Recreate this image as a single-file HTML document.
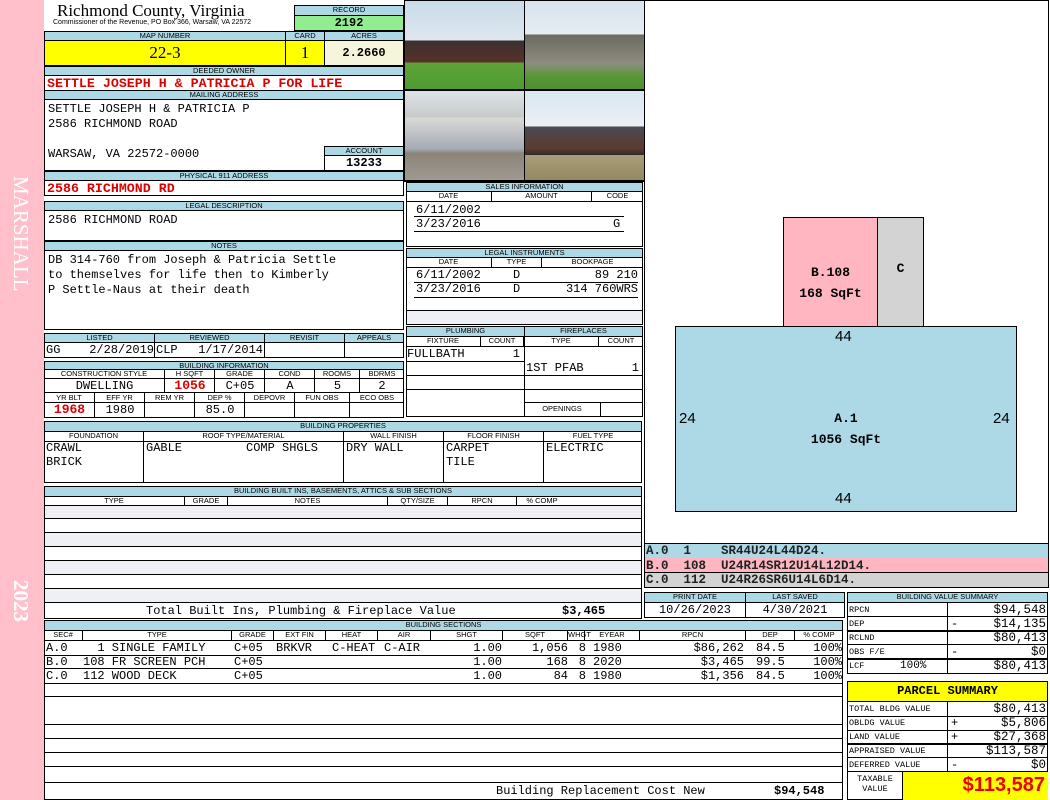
<!DOCTYPE html>
<html><head><meta charset="utf-8"><style>
*{box-sizing:border-box;margin:0;padding:0}
body{width:1050px;height:800px;background:#fff;position:relative;overflow:hidden;font-family:"Liberation Mono",monospace;font-size:12px;color:#000}
div{position:absolute}
.h{background:#add8e6;border:1px solid #000;font:7.5px "Liberation Sans",sans-serif;text-align:center;line-height:8px;white-space:nowrap;overflow:hidden}
.b{border:1px solid #000;background:#fff}
.s{font:7.5px "Liberation Sans",sans-serif;text-align:center;line-height:9px;border-right:1px solid #000;top:0;height:100%}
.m{font:12px "Liberation Mono",monospace;white-space:pre;line-height:14px}
.r{color:#d00;font-weight:bold}
.hl{border-bottom:1px solid #000;left:0;right:0}
.ra{text-align:right}
</style></head><body>
<div style="left:0;top:0;width:44px;height:800px;background:#ffc0cb"></div>
<div style="top:176px;color:#fff;font:21px 'Liberation Serif',serif;transform:rotate(90deg);transform-origin:0 0;left:33px;white-space:nowrap">MARSHALL</div>
<div style="left:33px;top:580px;color:#fff;font:bold 21px 'Liberation Serif',serif;transform:rotate(90deg);transform-origin:0 0;white-space:nowrap">2023</div>

<div style="left:57px;top:1px;font:17px 'Liberation Serif',serif">Richmond County, Virginia</div>
<div style="left:53px;top:19px;font:7px 'Liberation Sans',sans-serif;white-space:nowrap">Commissioner of the Revenue, PO Box 366, Warsaw, VA 22572</div>
<div class="h" style="left:294px;top:5px;width:110px;height:11px">RECORD</div>
<div style="left:294px;top:15px;width:110px;height:16px;background:#90ee90;border:1px solid #000;text-align:center;font:bold 12px 'Liberation Mono';line-height:14px">2192</div>

<div class="h" style="left:44px;top:31px;width:242px;height:10px">MAP NUMBER</div>
<div class="h" style="left:285px;top:31px;width:40px;height:10px">CARD</div>
<div class="h" style="left:324px;top:31px;width:80px;height:10px">ACRES</div>
<div style="left:44px;top:40px;width:242px;height:26px;background:#ffff00;border:1px solid #000;text-align:center;font:17px 'Liberation Serif',serif;line-height:24px">22-3</div>
<div style="left:285px;top:40px;width:40px;height:26px;background:#ffff00;border:1px solid #000;text-align:center;font:17px 'Liberation Serif',serif;line-height:24px">1</div>
<div style="left:324px;top:40px;width:80px;height:26px;background:#f5f5dc;border:1px solid #000;text-align:center;font:bold 12px 'Liberation Mono';line-height:24px">2.2660</div>

<div class="h" style="left:44px;top:66px;width:360px;height:10px">DEEDED OWNER</div>
<div class="b m r" style="left:44px;top:75px;width:360px;height:16px;line-height:15px;padding-left:2px;font-size:13.3px">SETTLE JOSEPH H &amp; PATRICIA P FOR LIFE</div>
<div class="h" style="left:44px;top:90px;width:360px;height:10px">MAILING ADDRESS</div>
<div class="b m" style="left:44px;top:99px;width:360px;height:72px;padding:2px 0 0 3px;line-height:15px">SETTLE JOSEPH H &amp; PATRICIA P
2586 RICHMOND ROAD

WARSAW, VA 22572-0000</div>
<div class="h" style="left:324px;top:146px;width:80px;height:10px">ACCOUNT</div>
<div class="b m" style="left:324px;top:155px;width:80px;height:16px;text-align:center;font-weight:bold;line-height:14px">13233</div>
<div class="h" style="left:44px;top:171px;width:360px;height:10px">PHYSICAL 911 ADDRESS</div>
<div class="b m r" style="left:44px;top:180px;width:360px;height:16px;line-height:15px;padding-left:2px;font-size:13.3px">2586 RICHMOND RD</div>

<div class="h" style="left:44px;top:201px;width:360px;height:10px">LEGAL DESCRIPTION</div>
<div class="b m" style="left:44px;top:210px;width:360px;height:31px;padding:2px 0 0 3px">2586 RICHMOND ROAD</div>
<div class="h" style="left:44px;top:241px;width:360px;height:10px">NOTES</div>
<div class="b m" style="left:44px;top:250px;width:360px;height:80px;padding:2px 0 0 3px;line-height:15px">DB 314-760 from Joseph &amp; Patricia Settle
to themselves for life then to Kimberly
P Settle-Naus at their death</div>

<div class="h" style="left:44px;top:333px;width:111px;height:10px">LISTED</div>
<div class="h" style="left:154px;top:333px;width:111px;height:10px">REVIEWED</div>
<div class="h" style="left:264px;top:333px;width:81px;height:10px">REVISIT</div>
<div class="h" style="left:344px;top:333px;width:60px;height:10px">APPEALS</div>
<div class="b" style="left:44px;top:342px;width:360px;height:16px"></div>
<div style="left:154px;top:342px;width:1px;height:16px;background:#000"></div>
<div style="left:264px;top:342px;width:1px;height:16px;background:#000"></div>
<div style="left:344px;top:342px;width:1px;height:16px;background:#000"></div>
<div class="m" style="left:46px;top:343px">GG</div>
<div class="m ra" style="left:60px;top:343px;width:94px">2/28/2019</div>
<div class="m" style="left:156px;top:343px">CLP</div>
<div class="m ra" style="left:170px;top:343px;width:93px">1/17/2014</div>

<div class="h" style="left:44px;top:361px;width:360px;height:9px">BUILDING INFORMATION</div>
<div class="b" style="left:44px;top:369px;width:360px;height:49px"></div>
<div class="hl" style="left:44px;width:360px;top:369px;height:10px;right:auto"></div>
<div class="hl" style="left:44px;width:360px;top:369px;height:24px;right:auto"></div>
<div class="hl" style="left:44px;width:360px;top:369px;height:34px;right:auto"></div>
<div style="left:44px;top:369px;width:360px;height:24px">
<div class="s" style="left:0;width:121px">CONSTRUCTION STYLE</div><div class="s" style="left:121px;width:50px">H SQFT</div><div class="s" style="left:171px;width:50px">GRADE</div><div class="s" style="left:221px;width:50px">COND</div><div class="s" style="left:271px;width:45px">ROOMS</div><div class="s" style="left:316px;width:44px;border:0">BDRMS</div>
</div>
<div class="m" style="left:44px;top:379px;width:121px;text-align:center">DWELLING</div>
<div class="m r" style="left:165px;top:379px;width:50px;text-align:center;font-size:13px">1056</div>
<div class="m" style="left:215px;top:379px;width:50px;text-align:center">C+05</div>
<div class="m" style="left:265px;top:379px;width:50px;text-align:center">A</div>
<div class="m" style="left:315px;top:379px;width:45px;text-align:center">5</div>
<div class="m" style="left:360px;top:379px;width:44px;text-align:center">2</div>
<div style="left:44px;top:393px;width:360px;height:25px">
<div class="s" style="left:0;width:51px">YR BLT</div><div class="s" style="left:51px;width:50px">EFF YR</div><div class="s" style="left:101px;width:50px">REM YR</div><div class="s" style="left:151px;width:50px">DEP %</div><div class="s" style="left:201px;width:50px">DEPOVR</div><div class="s" style="left:251px;width:55px">FUN OBS</div><div class="s" style="left:306px;width:54px;border:0">ECO OBS</div>
</div>
<div class="m r" style="left:44px;top:403px;width:51px;text-align:center;font-size:13px">1968</div>
<div class="m" style="left:95px;top:403px;width:50px;text-align:center">1980</div>
<div class="m" style="left:195px;top:403px;width:50px;text-align:center">85.0</div>

<div class="h" style="left:44px;top:421px;width:598px;height:11px">BUILDING PROPERTIES</div>
<div class="b" style="left:44px;top:431px;width:598px;height:52px"></div>
<div class="hl" style="left:44px;width:598px;top:431px;height:11px;right:auto"></div>
<div style="left:44px;top:431px;width:598px;height:52px">
<div class="s" style="left:0;width:100px">FOUNDATION</div><div class="s" style="left:100px;width:200px">ROOF TYPE/MATERIAL</div><div class="s" style="left:300px;width:100px">WALL FINISH</div><div class="s" style="left:400px;width:100px">FLOOR FINISH</div><div class="s" style="left:500px;width:98px;border:0">FUEL TYPE</div>
</div>
<div class="m" style="left:46px;top:441px">CRAWL
BRICK</div>
<div class="m" style="left:146px;top:441px">GABLE</div>
<div class="m" style="left:246px;top:441px">COMP SHGLS</div>
<div class="m" style="left:346px;top:441px">DRY WALL</div>
<div class="m" style="left:446px;top:441px">CARPET
TILE</div>
<div class="m" style="left:546px;top:441px">ELECTRIC</div>

<div class="h" style="left:44px;top:486px;width:598px;height:11px">BUILDING BUILT INS, BASEMENTS, ATTICS &amp; SUB SECTIONS</div>
<div class="b" style="left:44px;top:496px;width:598px;height:123px"></div>
<div style="left:44px;top:496px;width:598px;height:10px;border-bottom:1px solid #000">
<div class="s" style="left:0;width:141px">TYPE</div><div class="s" style="left:141px;width:43px">GRADE</div><div class="s" style="left:184px;width:160px">NOTES</div><div class="s" style="left:344px;width:60px">QTY/SIZE</div><div class="s" style="left:404px;width:69px">RPCN</div><div class="s" style="left:473px;border:0;width:50px">% COMP</div>
</div>
<div style="left:45px;top:506px;width:596px;height:13px;background:#eef0f6;border-bottom:1px solid #000"></div>
<div style="left:45px;top:519px;width:596px;height:14px;border-bottom:1px solid #000"></div>
<div style="left:45px;top:533px;width:596px;height:14px;background:#eef0f6;border-bottom:1px solid #000"></div>
<div style="left:45px;top:547px;width:596px;height:14px;border-bottom:1px solid #000"></div>
<div style="left:45px;top:561px;width:596px;height:14px;background:#eef0f6;border-bottom:1px solid #000"></div>
<div style="left:45px;top:575px;width:596px;height:14px;border-bottom:1px solid #000"></div>
<div style="left:45px;top:589px;width:596px;height:14px;background:#eef0f6;border-bottom:1px solid #000"></div>
<div class="m" style="left:146px;top:604px">Total Built Ins, Plumbing &amp; Fireplace Value</div>
<div class="m" style="left:562px;top:604px;font-weight:bold">$3,465</div>

<div class="h" style="left:44px;top:620px;width:799px;height:11px">BUILDING SECTIONS</div>
<div class="b" style="left:44px;top:630px;width:799px;height:170px"></div>
<div style="left:44px;top:630px;width:799px;height:11px;border-bottom:1px solid #000">
<div class="s" style="left:0;width:39px">SEC#</div><div class="s" style="left:39px;width:149px">TYPE</div><div class="s" style="left:188px;width:42px">GRADE</div><div class="s" style="left:230px;width:52px">EXT FIN</div><div class="s" style="left:282px;width:52px">HEAT</div><div class="s" style="left:334px;width:53px">AIR</div><div class="s" style="left:387px;width:72px">SHGT</div><div class="s" style="left:459px;width:65px">SQFT</div><div class="s" style="left:524px;width:17px">WHGT</div><div class="s" style="left:541px;width:55px">EYEAR</div><div class="s" style="left:596px;width:106px">RPCN</div><div class="s" style="left:702px;width:49px">DEP</div><div class="s" style="left:751px;width:48px;border:0">% COMP</div>
</div>
<div style="left:45px;top:655px;width:797px;height:14px;border-top:1px solid #000;border-bottom:1px solid #000"></div>
<div style="left:45px;top:683px;width:797px;height:14px;border-top:1px solid #000;border-bottom:1px solid #000"></div>
<div style="left:45px;top:711px;width:797px;height:14px;border-bottom:1px solid #000"></div>
<div style="left:45px;top:725px;width:797px;height:14px;border-bottom:1px solid #000"></div>
<div style="left:45px;top:739px;width:797px;height:14px;border-bottom:1px solid #000"></div>
<div style="left:45px;top:753px;width:797px;height:14px;border-bottom:1px solid #000"></div>
<div style="left:45px;top:767px;width:797px;height:16px;border-bottom:1px solid #000"></div>
<div class="m" style="left:46px;top:641px">A.0
B.0
C.0</div>
<div class="m" style="left:83px;top:641px">  1 SINGLE FAMILY
108 FR SCREEN PCH
112 WOOD DECK</div>
<div class="m" style="left:234px;top:641px">C+05
C+05
C+05</div>
<div class="m" style="left:276px;top:641px">BRKVR</div>
<div class="m" style="left:332px;top:641px">C-HEAT</div>
<div class="m" style="left:384px;top:641px">C-AIR</div>
<div class="m ra" style="left:440px;top:641px;width:62px">1.00
1.00
1.00</div>
<div class="m ra" style="left:505px;top:641px;width:63px">1,056
168
84</div>
<div class="m ra" style="left:570px;top:641px;width:16px">8
8
8</div>
<div class="m" style="left:593px;top:641px">1980
2020
1980</div>
<div class="m ra" style="left:650px;top:641px;width:94px">$86,262
$3,465
$1,356</div>
<div class="m" style="left:756px;top:641px">84.5
99.5
84.5</div>
<div class="m ra" style="left:795px;top:641px;width:47px">100%
100%
100%</div>
<div class="m" style="left:496px;top:784px">Building Replacement Cost New</div>
<div class="m" style="left:774px;top:784px;font-weight:bold">$94,548</div>

<!-- photos -->
<div style="left:404px;top:0;width:241px;height:182px;background:#000"></div>
<div style="left:405px;top:1px;width:119px;height:88px;background:linear-gradient(#c9dbe9 0,#dfe7ef 45%,#3a3030 45%,#5a3028 70%,#5fa33a 70%,#4f9a30 100%)"></div>
<div style="left:525px;top:1px;width:119px;height:88px;background:linear-gradient(#d7e3ee 0,#e6ecf2 38%,#6a6a5e 38%,#8d8a7e 70%,#8e8d86 70%,#5a9636 85%,#4e8f2e 100%)"></div>
<div style="left:405px;top:91px;width:119px;height:89px;background:linear-gradient(#dde3e7 0,#c5c9c8 30%,#dad9d6 30%,#a5abb4 65%,#8a8478 70%,#a09990 100%)"></div>
<div style="left:525px;top:91px;width:119px;height:89px;background:linear-gradient(#d9e6f2 0,#ecf0f4 40%,#4a4a52 40%,#5a3a30 65%,#2e2a28 72%,#a89c7a 72%,#958962 100%)"></div>

<!-- sales -->
<div class="h" style="left:406px;top:182px;width:237px;height:10px">SALES INFORMATION</div>
<div class="b" style="left:406px;top:191px;width:237px;height:56px"></div>
<div style="left:406px;top:191px;width:237px;height:11px;border-bottom:1px solid #000"><div class="s" style="left:0;width:86px">DATE</div><div class="s" style="left:86px;width:100px">AMOUNT</div><div class="s" style="left:186px;width:51px;border:0">CODE</div></div>
<div style="left:414px;top:216px;width:210px;border-top:1px solid #000"></div>
<div style="left:414px;top:231px;width:210px;border-top:1px solid #000"></div>
<div class="m" style="left:416px;top:203px">6/11/2002
3/23/2016</div>
<div class="m" style="left:613px;top:217px">G</div>

<div class="h" style="left:406px;top:248px;width:237px;height:10px">LEGAL INSTRUMENTS</div>
<div class="b" style="left:406px;top:257px;width:237px;height:68px"></div>
<div style="left:406px;top:257px;width:237px;height:11px;border-bottom:1px solid #000"><div class="s" style="left:0;width:86px">DATE</div><div class="s" style="left:86px;width:50px">TYPE</div><div class="s" style="left:136px;width:101px;border:0">BOOKPAGE</div></div>
<div style="left:414px;top:282px;width:224px;border-top:1px solid #000"></div>
<div style="left:414px;top:297px;width:224px;border-top:1px solid #000"></div>
<div style="left:407px;top:310px;width:235px;height:14px;background:#eef0f6;border-top:1px solid #000"></div>
<div class="m" style="left:416px;top:268px">6/11/2002
3/23/2016</div>
<div class="m" style="left:513px;top:268px">D
D</div>
<div class="m ra" style="left:540px;top:268px;width:98px">89 210
314 760WRS</div>

<div class="h" style="left:406px;top:326px;width:119px;height:11px">PLUMBING</div>
<div class="h" style="left:524px;top:326px;width:119px;height:11px">FIREPLACES</div>
<div class="b" style="left:406px;top:336px;width:237px;height:81px"></div>
<div style="left:406px;top:336px;width:237px;height:11px;border-bottom:1px solid #000"><div class="s" style="left:0;width:75px">FIXTURE</div><div class="s" style="left:75px;width:43px">COUNT</div><div class="s" style="left:118px;width:75px">TYPE</div><div class="s" style="left:193px;width:44px;border:0">COUNT</div></div>
<div style="left:524px;top:336px;width:1px;height:81px;background:#000"></div>
<div style="left:407px;top:361px;width:117px;border-top:1px solid #000"></div>
<div style="left:407px;top:375px;width:235px;border-top:1px solid #000"></div>
<div style="left:407px;top:389px;width:235px;border-top:1px solid #000"></div>
<div style="left:524px;top:402px;width:118px;border-top:1px solid #000"></div>
<div style="left:600px;top:402px;width:1px;height:15px;background:#000"></div>
<div style="left:524px;top:404px;width:76px;font:7.5px 'Liberation Sans';text-align:center">OPENINGS</div>
<div class="m" style="left:407px;top:347px">FULLBATH</div>
<div class="m ra" style="left:480px;top:347px;width:40px">1</div>
<div class="m" style="left:526px;top:361px">1ST PFAB</div>
<div class="m ra" style="left:600px;top:361px;width:39px">1</div>

<!-- sketch -->
<div class="b" style="left:644px;top:0;width:405px;height:544px"></div>
<div style="left:783px;top:217px;width:95px;height:110px;background:#ffb6c1;border:1px solid #000"></div>
<div style="left:877px;top:217px;width:47px;height:110px;background:#d3d3d3;border:1px solid #000"></div>
<div style="left:675px;top:326px;width:342px;height:186px;background:#add8e6;border:1px solid #000"></div>
<div class="m" style="left:783px;top:262px;width:95px;text-align:center;font-weight:bold;font-size:13px;line-height:21px">B.108
168 SqFt</div>
<div class="m" style="left:877px;top:262px;width:47px;text-align:center;font-weight:bold;font-size:13px;line-height:14px">C</div>
<div class="m" style="left:675px;top:408px;width:342px;text-align:center;font-weight:bold;font-size:13px;line-height:21px">A.1
1056 SqFt</div>
<div style="left:835px;top:328px;font:15px 'Liberation Sans'">44</div>
<div style="left:835px;top:490px;font:15px 'Liberation Sans'">44</div>
<div style="left:679px;top:410px;font:15px 'Liberation Sans'">24</div>
<div style="left:993px;top:410px;font:15px 'Liberation Sans'">24</div>

<div style="left:644px;top:543px;width:405px;height:15px;background:#add8e6;border:1px solid #000"></div>
<div style="left:644px;top:557px;width:405px;height:15px;background:#ffb6c1;border-left:1px solid #000;border-right:1px solid #000"></div>
<div style="left:644px;top:572px;width:405px;height:16px;background:#d3d3d3;border:1px solid #000"></div>
<div class="m" style="left:646px;top:544px;font-size:12.5px;line-height:14.5px;font-weight:bold;color:#222">A.0  1    SR44U24L44D24.
B.0  108  U24R14SR12U14L12D14.
C.0  112  U24R26SR6U14L6D14.</div>

<div class="h" style="left:644px;top:592px;width:102px;height:11px">PRINT DATE</div>
<div class="h" style="left:745px;top:592px;width:100px;height:11px">LAST SAVED</div>
<div class="b m" style="left:644px;top:602px;width:102px;height:16px;text-align:center">10/26/2023</div>
<div class="b m" style="left:745px;top:602px;width:100px;height:16px;text-align:center">4/30/2021</div>

<div class="h" style="left:847px;top:592px;width:201px;height:11px">BUILDING VALUE SUMMARY</div>
<div class="b" style="left:847px;top:602px;width:201px;height:72px"></div>
<div style="left:947px;top:602px;width:1px;height:72px;background:#000"></div>
<div style="left:848px;top:616px;width:199px;border-top:1px solid #000"></div>
<div style="left:848px;top:630px;width:199px;border-top:2px solid #000"></div>
<div style="left:848px;top:644px;width:199px;border-top:1px solid #000"></div>
<div style="left:848px;top:658px;width:199px;border-top:2px solid #000"></div>
<div class="m" style="left:849px;top:603px;font-size:8.5px;line-height:14px">RPCN
DEP
RCLND
OBS F/E
LCF</div>
<div class="m" style="left:900px;top:659px;font-size:11px">100%</div>
<div class="m" style="left:950px;top:603px;font-size:12.5px;width:96px;text-align:right;line-height:14px">$94,548
$14,135
$80,413
$0
$80,413</div>
<div class="m" style="left:951px;top:617px">-</div>
<div class="m" style="left:951px;top:645px">-</div>

<div class="b" style="left:847px;top:681px;width:201px;height:119px"></div>
<div style="left:848px;top:682px;width:199px;height:20px;background:#ffff00;border-bottom:1px solid #000;text-align:center;font:bold 12px 'Liberation Mono';line-height:19px">PARCEL SUMMARY</div>
<div style="left:947px;top:702px;width:1px;height:70px;background:#000"></div>
<div style="left:848px;top:716px;width:199px;border-top:1px solid #000"></div>
<div style="left:848px;top:730px;width:199px;border-top:1px solid #000"></div>
<div style="left:848px;top:743px;width:199px;border-top:2px solid #000"></div>
<div style="left:848px;top:757px;width:199px;border-top:1px solid #000"></div>
<div style="left:848px;top:771px;width:199px;border-top:1px solid #000"></div>
<div class="m" style="left:849px;top:702px;font-size:8.5px;line-height:14px">TOTAL BLDG VALUE
OBLDG VALUE
LAND VALUE
APPRAISED VALUE
DEFERRED VALUE</div>
<div class="m" style="left:950px;top:702px;font-size:12.5px;width:96px;text-align:right;line-height:14px">$80,413
$5,806
$27,368
$113,587
$0</div>
<div class="m" style="left:951px;top:716px">+
+

-</div>
<div class="m" style="left:848px;top:774px;width:54px;text-align:center;font-size:8.5px;line-height:10px">TAXABLE
VALUE</div>
<div style="left:902px;top:772px;width:146px;height:28px;background:#ffff00;border-left:1px solid #000;text-align:right;padding-right:3px;color:#e00;font:bold 20px 'Liberation Sans',sans-serif;line-height:26px">$113,587</div>
</body></html>
